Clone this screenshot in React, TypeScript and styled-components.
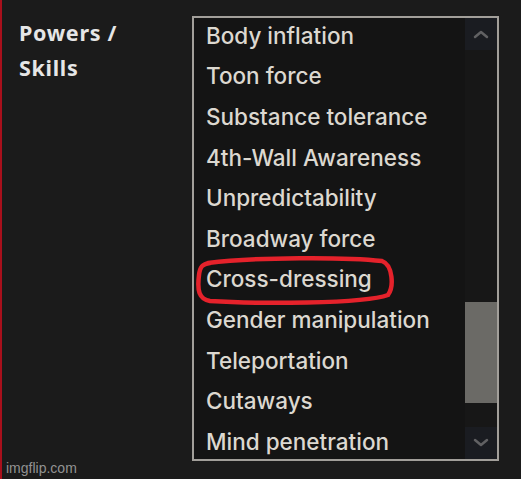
import styled, { createGlobalStyle } from "styled-components";

const GlobalStyle = createGlobalStyle`
    html, body {
        margin: 0;
        padding: 0;
        background: #1b1b1b;
    }
`;

const skills = [
    "Body inflation",
    "Toon force",
    "Substance tolerance",
    "4th-Wall Awareness",
    "Unpredictability",
    "Broadway force",
    "Cross-dressing",
    "Gender manipulation",
    "Teleportation",
    "Cutaways",
    "Mind penetration",
];

const Page = styled.div`
    position: relative;
    width: 521px;
    height: 479px;
    background: #1b1b1b;
    border-left: 2px solid #a8101c;
    box-sizing: border-box;
    display: flex;
    align-items: flex-start;
    padding: 16px 0 0 17px;
    overflow: hidden;
`;

const Label = styled.div`
    width: 173px;
    margin-top: -1px;
    font-family: "Noto Sans", sans-serif;
    font-weight: 700;
    font-size: 21.5px;
    letter-spacing: 0.7px;
    line-height: 35px;
    color: #e6e6e6;
`;

const ListBox = styled.div`
    position: relative;
    width: 307px;
    height: 445px;
    box-sizing: border-box;
    border: 2px solid #a29f9a;
    background: #141414;
    display: flex;
`;

const List = styled.ul`
    flex: 1;
    list-style: none;
    margin: 0;
    padding: 0 0 0 12px;
`;

const Item = styled.li`
    height: 40.6px;
    box-sizing: border-box;
    padding-bottom: 6px;
    display: flex;
    align-items: center;
    font-family: "Inter", sans-serif;
    font-weight: 500;
    font-size: 22.5px;
    color: #dcd8d0;
    white-space: nowrap;
`;

const Scrollbar = styled.div`
    width: 32px;
    display: flex;
    flex-direction: column;
    background: #171717;
`;

const ArrowButton = styled.div`
    height: 32px;
    display: flex;
    align-items: center;
    justify-content: center;
    background: #1a1c21;
`;

const Track = styled.div`
    flex: 1;
    display: flex;
    flex-direction: column;
    padding-top: 252px;
`;

const Thumb = styled.div`
    height: 101px;
    background: #6b6a66;
`;

const Highlight = styled.svg`
    position: absolute;
    left: 194px;
    top: 255px;
    overflow: visible;
`;

const Watermark = styled.div`
    position: absolute;
    left: 4px;
    bottom: 3px;
    font-family: "Liberation Sans", Arial, sans-serif;
    font-size: 14px;
    color: rgba(200, 200, 200, 0.7);
`;

function Chevron({ up }: { up?: boolean }) {
    return (
        <svg width="16" height="10" viewBox="0 0 16 10">
            <path
                d={up ? "M2 8 L8 3 L14 8" : "M2 2 L8 7 L14 2"}
                fill="none"
                stroke="#616163"
                strokeWidth="2.5"
                strokeLinecap="round"
                strokeLinejoin="round"
            />
        </svg>
    );
}

export default function App() {
    return (
        <>
            <GlobalStyle />
            <Page>
                <Label>
                    Powers /
                    <br />
                    Skills
                </Label>
                <ListBox>
                    <List>
                        {skills.map((s) => (
                            <Item key={s}>{s}</Item>
                        ))}
                    </List>
                    <Scrollbar>
                        <ArrowButton>
                            <Chevron up />
                        </ArrowButton>
                        <Track>
                            <Thumb />
                        </Track>
                        <ArrowButton>
                            <Chevron />
                        </ArrowButton>
                    </Scrollbar>
                </ListBox>
                <Highlight width="198" height="50" viewBox="0 0 198 50">
                    <path
                        d="M12 8 C60 2 150 2 186 6 C197 10 198 32 192 40 C168 49 60 49 14 46 C3 44 1 36 3 20 C4 12 6 9 14 8"
                        fill="none"
                        stroke="#e5222b"
                        strokeWidth="4.5"
                        strokeLinecap="round"
                    />
                </Highlight>
                <Watermark>imgflip.com</Watermark>
            </Page>
        </>
    );
}
